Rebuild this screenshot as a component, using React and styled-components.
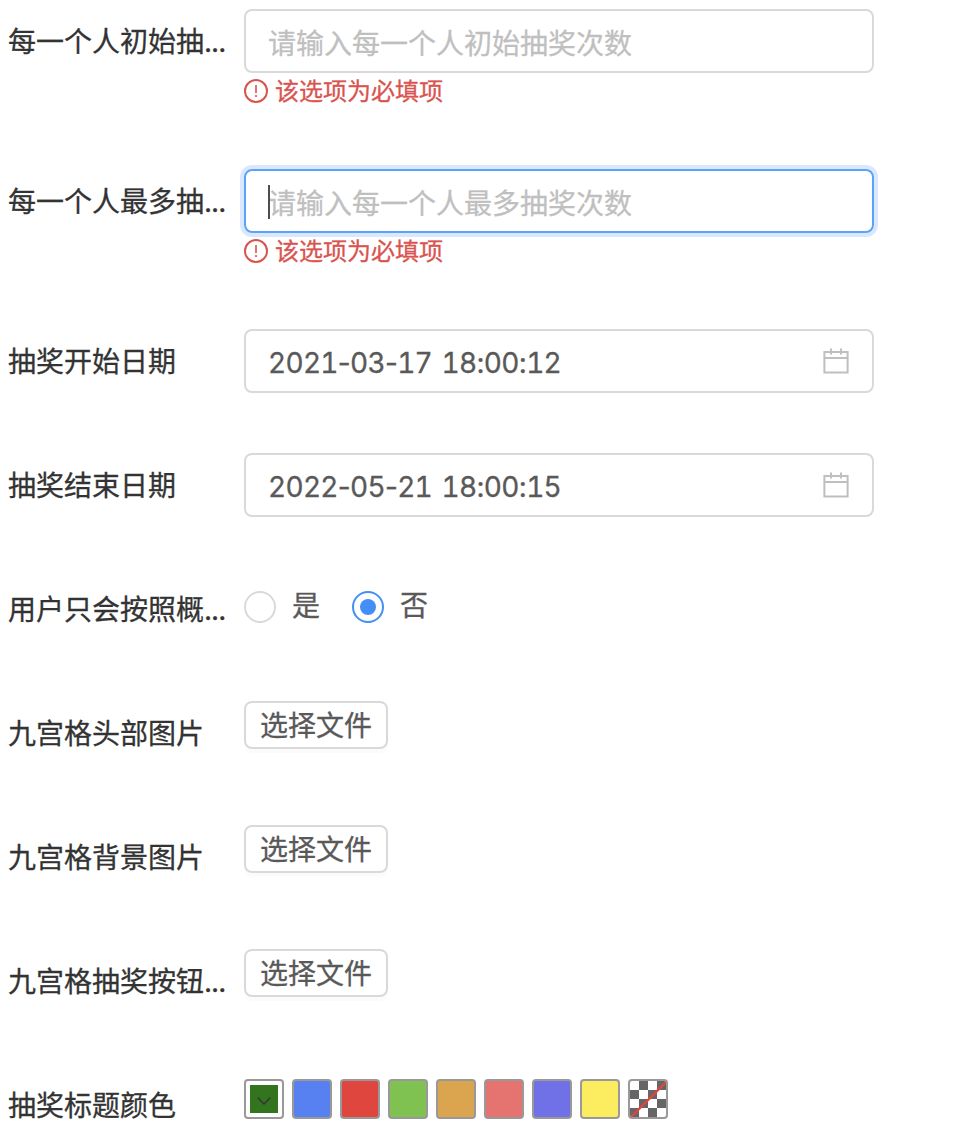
import React, { useState } from 'react'
import styled, { createGlobalStyle, css } from 'styled-components'

const GlobalStyle = createGlobalStyle`
  * {
    box-sizing: border-box;
  }

  body {
    margin: 0;
    background: #ffffff;
    font-family: Inter, "Noto Sans CJK SC", sans-serif;
    font-size: 28px;
    color: #595959;
    -webkit-text-stroke: 0.3px currentColor;
  }
`

const Form = styled.div`
  width: 961px;
  height: 1132px;
  padding: 9px 0 0 8px;
  overflow: hidden;
`

const FormItem = styled.div`
  display: flex;
  align-items: flex-start;
  margin-bottom: 60px;
`

const Label = styled.div`
  width: 236px;
  height: 64px;
  line-height: 66px;
  color: #333333;
  white-space: nowrap;
`

const Dots = styled.span`
  letter-spacing: -1px;
`

const Control = styled.div`
  width: 630px;
  min-height: 64px;
`

const Field = styled.div`
  position: relative;
  display: flex;
  align-items: center;
  justify-content: space-between;
  height: 64px;
  padding: 6px 22px 0;
  border: 2px solid #d9d9d9;
  border-radius: 8px;
  line-height: 40px;
  cursor: text;

  ${props => props.$focused && css`
    border-color: #5ba3f8;
    box-shadow: 0 0 0 4px #d9e8fd;
  `}
`

const Placeholder = styled.span`
  color: #bfbfbf;
`

const DateText = styled.span`
  padding-bottom: 2px;
  font-variant-numeric: tabular-nums;
  letter-spacing: -0.7px;
  word-spacing: 2.7px;
  white-space: pre;
`

// separators keep their own width, only digits are tabular
const Separator = styled.span`
  font-variant-numeric: normal;
`

const Caret = styled.span`
  position: absolute;
  left: 22px;
  top: 14px;
  width: 2px;
  height: 34px;
  background: #4d4d4d;
`

const ErrorRow = styled.div`
  display: flex;
  align-items: center;
  gap: 7px;
  height: 36px;
  line-height: 36px;
  font-size: 24px;
  color: #d9534f;
`

const CalendarSvg = styled.svg`
  margin-top: -6px;
`

const RadioGroup = styled.div`
  display: flex;
  gap: 32px;
  padding-top: 14px;
`

const RadioLabel = styled.div`
  display: flex;
  gap: 16px;
  height: 32px;
  line-height: 30px;
  cursor: pointer;
`

const RadioCircle = styled.span`
  display: flex;
  align-items: center;
  justify-content: center;
  width: 32px;
  height: 32px;
  border: 2px solid ${props => props.$checked ? '#448ef7' : '#d9d9d9'};
  border-radius: 50%;
`

const RadioDot = styled.span`
  width: 16px;
  height: 16px;
  border-radius: 50%;
  background: #448ef7;
`

const FileButton = styled.button`
  display: block;
  width: 144px;
  height: 48px;
  padding: 3px 0 0;
  border: 2px solid #d9d9d9;
  border-radius: 8px;
  background: #ffffff;
  box-shadow: 0 4px 0 rgba(0, 0, 0, 0.016);
  color: #595959;
  font: inherit;
  line-height: 41px;
  cursor: pointer;
`

const Swatches = styled.div`
  display: flex;
  gap: 8px;
  padding-top: 6px;
`

const Swatch = styled.div`
  width: 40px;
  height: 40px;
  border: 2px solid #999999;
  border-radius: 4px;
  background: ${props => props.$color || '#ffffff'};
  overflow: hidden;
`

const PickerSwatch = styled(Swatch)`
  padding: 4px;
`

const PickerColor = styled.div`
  display: flex;
  align-items: center;
  justify-content: center;
  width: 28px;
  height: 28px;
  padding-top: 4px;
  background: #33751f;
`

const colors = ['#5781f0', '#df463d', '#7fc251', '#dba550', '#e5736f', '#7070e7', '#fbec60']

const CalendarIcon = () => (
  <CalendarSvg width="28" height="28" viewBox="0 0 28 28" fill="none" stroke="#bfbfbf" strokeWidth="2">
    <path d="M2.4 5H25.6V25.5H2.4Z" />
    <path d="M2.4 11H25.6M9 1.5V7.5M19 1.5V7.5" />
  </CalendarSvg>
)

const DateField = ({ value }) => (
  <Field>
    <DateText>
      {value.split(/([-:])/).map((part, i) => (
        i % 2 ? <Separator key={i}>{part}</Separator> : part
      ))}
    </DateText>
    <CalendarIcon />
  </Field>
)

const ErrorText = styled.span`
  padding-top: 1px;
`

const ErrorMessage = ({ children }) => (
  <ErrorRow>
    <svg width="24" height="24" viewBox="0 0 24 24" fill="none" stroke="currentColor">
      <circle cx="12" cy="12" r="11" strokeWidth="2" />
      <path d="M12 6V14" strokeWidth="1.6" />
      <circle cx="12" cy="17" r="1.1" fill="currentColor" stroke="none" />
    </svg>
    <ErrorText>{children}</ErrorText>
  </ErrorRow>
)

const Item = ({ label, clipped, children }) => (
  <FormItem>
    <Label>
      {label}
      {clipped && <Dots>...</Dots>}
    </Label>
    <Control>{children}</Control>
  </FormItem>
)

const App = () => {
  const [checked, setChecked] = useState('否')

  return (
    <>
      <GlobalStyle />
      <Form>
        <Item label="每一个人初始抽" clipped>
          <Field>
            <Placeholder>请输入每一个人初始抽奖次数</Placeholder>
          </Field>
          <ErrorMessage>该选项为必填项</ErrorMessage>
        </Item>
        <Item label="每一个人最多抽" clipped>
          <Field $focused>
            <Caret />
            <Placeholder>请输入每一个人最多抽奖次数</Placeholder>
          </Field>
          <ErrorMessage>该选项为必填项</ErrorMessage>
        </Item>
        <Item label="抽奖开始日期">
          <DateField value="2021-03-17 18:00:12" />
        </Item>
        <Item label="抽奖结束日期">
          <DateField value="2022-05-21 18:00:15" />
        </Item>
        <Item label="用户只会按照概" clipped>
          <RadioGroup>
            {['是', '否'].map(option => (
              <RadioLabel key={option} onClick={() => setChecked(option)}>
                <RadioCircle $checked={checked === option}>
                  {checked === option && <RadioDot />}
                </RadioCircle>
                <span>{option}</span>
              </RadioLabel>
            ))}
          </RadioGroup>
        </Item>
        <Item label="九宫格头部图片">
          <FileButton>选择文件</FileButton>
        </Item>
        <Item label="九宫格背景图片">
          <FileButton>选择文件</FileButton>
        </Item>
        <Item label="九宫格抽奖按钮" clipped>
          <FileButton>选择文件</FileButton>
        </Item>
        <Item label="抽奖标题颜色">
          <Swatches>
            <PickerSwatch>
              <PickerColor>
                <svg width="14" height="8" viewBox="0 0 14 8" fill="none" stroke="#333333" strokeWidth="1.4">
                  <path d="M0.8 0.8L7 7L13.2 0.8" />
                </svg>
              </PickerColor>
            </PickerSwatch>
            {colors.map(color => <Swatch key={color} $color={color} />)}
            <Swatch>
              <svg width="36" height="36" viewBox="0 0 36 36" display="block">
                <path
                  d="M9 0h9v9h-9zM27 0h9v9h-9zM0 9h9v9h-9zM18 9h9v9h-9zM9 18h9v9h-9zM27 18h9v9h-9zM0 27h9v9h-9zM18 27h9v9h-9z"
                  fill="#666666"
                />
                <path d="M1 36L36 1" stroke="#df463d" strokeWidth="2.4" />
              </svg>
            </Swatch>
          </Swatches>
        </Item>
      </Form>
    </>
  )
}

export default App
